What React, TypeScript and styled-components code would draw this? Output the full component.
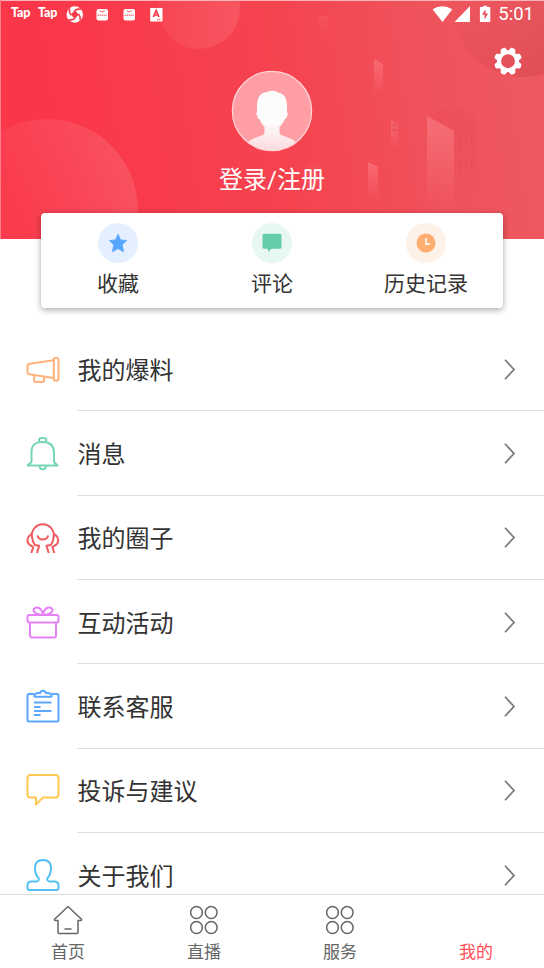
import React from "react";
import styled, { createGlobalStyle } from "styled-components";

const GlobalStyle = createGlobalStyle`
  * { box-sizing: border-box; }
  html, body { margin: 0; padding: 0; overflow: hidden; background: #fff; }
  body { font-family: Roboto, "Noto Sans CJK SC", sans-serif; color: #333; }
  svg { display: block; flex: none; }
`;

const Screen = styled.div`
  display: flex;
  flex-direction: column;
  width: 544px;
  height: 968px;
  overflow: hidden;
  background: #fff;
`;

const Header = styled.header`
  position: relative;
  display: flex;
  flex-direction: column;
  align-items: center;
  flex: none;
  height: 239px;
`;

const HeaderArt = styled.svg`
  position: absolute;
  inset: 0;
`;

const StatusBar = styled.div`
  position: relative;
  display: flex;
  justify-content: space-between;
  align-self: stretch;
  height: 27px;
  padding: 0 10px 0 11px;
`;

const StatusGroup = styled.div`
  display: flex;
  align-items: center;
`;

const TapMark = styled.span`
  width: 27px;
  color: #fff;
  font: 900 12.5px/24px Lato, sans-serif;
  letter-spacing: -0.2px;
  padding-bottom: 2px;
`;

const Clock = styled.span`
  color: #fff;
  font-size: 18.5px;
  line-height: 27px;
  margin-left: 6.5px;
  padding-top: 2px;
`;

const SettingsButton = styled.button`
  position: absolute;
  top: 46px;
  right: 21px;
  width: 30px;
  height: 30px;
  padding: 0;
  border: 0;
  background: none;
`;

const Avatar = styled.div`
  position: relative;
  margin-top: 43px;
`;

const LoginText = styled.div`
  position: relative;
  margin-top: 10px;
  color: #fff;
  font-size: 24px;
  line-height: 36px;
`;

const QuickCard = styled.section`
  position: relative;
  display: grid;
  grid-template-columns: repeat(3, 1fr);
  flex: none;
  width: 462px;
  height: 95px;
  margin: -26px 0 0 41px;
  border-radius: 4px;
  background: #fff;
  box-shadow: 0 2px 6px rgba(0, 0, 0, 0.34);
`;

const QuickItem = styled.div`
  display: flex;
  flex-direction: column;
  align-items: center;
  padding-top: 10px;
`;

const QuickLabel = styled.span`
  margin-top: 5px;
  font-size: 21px;
  line-height: 32px;
`;

const Disc = styled.div<{ $tint: string }>`
  display: grid;
  place-items: center;
  width: 40px;
  height: 40px;
  border-radius: 50%;
  background: ${(p) => p.$tint};
`;

const Menu = styled.main`
  flex: 1;
  min-height: 0;
  overflow: hidden;
  padding-top: 19.2px;
`;

const MenuRow = styled.div`
  display: flex;
  height: 84.3px;
  padding-left: 25px;
`;

const MenuIcon = styled.div`
  display: flex;
  align-items: center;
  width: 52px;
  padding-top: 1px;
`;

const MenuBody = styled.div`
  display: flex;
  flex: 1;
  align-items: center;
  justify-content: space-between;
  padding: 2px 27.5px 0 0.5px;
  border-bottom: 1px solid #e0e0e0;
`;

const MenuLabel = styled.span`
  padding-top: 2px;
  font-size: 24px;
  line-height: 36px;
`;

const TabBar = styled.nav`
  display: grid;
  grid-template-columns: repeat(4, 1fr);
  flex: none;
  height: 74px;
  border-top: 1px solid #dcdcdc;
`;

const Tab = styled.div<{ $active?: boolean }>`
  display: flex;
  flex-direction: column;
  align-items: center;
  padding-top: 10px;
  color: ${(p) => (p.$active ? "#ff4d58" : "#666")};
`;

const TabIcon = styled.div`
  height: 30px;
`;

const TabLabel = styled.span`
  margin-top: 4px;
  font-size: 17px;
  line-height: 26px;
`;

const HeaderBackdrop = () => (
  <HeaderArt width="544" height="239" viewBox="0 0 544 239">
    <defs>
      <linearGradient id="base" gradientUnits="userSpaceOnUse" x1="60" y1="120" x2="520" y2="50">
        <stop offset="0" stopColor="#fa3749" />
        <stop offset="0.5" stopColor="#f5444f" />
        <stop offset="0.78" stopColor="#ef525b" />
        <stop offset="1" stopColor="#ee585f" />
      </linearGradient>
      <linearGradient id="bubble" x1="0.3" y1="0.5" x2="0.95" y2="0.2">
        <stop offset="0" stopColor="#fff" stopOpacity="0.02" />
        <stop offset="1" stopColor="#fff" stopOpacity="0.12" />
      </linearGradient>
      <linearGradient id="topBubble" x1="0" y1="0.5" x2="1" y2="0.5">
        <stop offset="0" stopColor="#fff" stopOpacity="0.04" />
        <stop offset="1" stopColor="#fff" stopOpacity="0.11" />
      </linearGradient>
      <linearGradient id="shade" x1="0.1" y1="0.5" x2="0.55" y2="1">
        <stop offset="0" stopColor="#b5303a" stopOpacity="0.02" />
        <stop offset="1" stopColor="#b5303a" stopOpacity="0.22" />
      </linearGradient>
      <linearGradient id="tower" x1="0" y1="0" x2="0" y2="1">
        <stop offset="0" stopColor="#ff8a92" stopOpacity="0.5" />
        <stop offset="1" stopColor="#ff8a92" stopOpacity="0" />
      </linearGradient>
      <linearGradient id="side" x1="0" y1="0" x2="0" y2="1">
        <stop offset="0" stopColor="#d63e4c" stopOpacity="0.12" />
        <stop offset="1" stopColor="#d63e4c" stopOpacity="0" />
      </linearGradient>
    </defs>
    <rect width="544" height="239" fill="url(#base)" />
    <circle cx="47" cy="210" r="91" fill="url(#bubble)" />
    <circle cx="199" cy="8" r="41" fill="url(#topBubble)" />
    <circle cx="523" cy="7" r="70" fill="url(#shade)" />
    <path d="M374 59l9 5v30h-9z" fill="url(#tower)" />
    <path d="M319 16h9v21h-9z" fill="url(#tower)" opacity="0.3" />
    <path d="M391 120l7 4v24h-7z" fill="url(#tower)" />
    <path d="M393 124l4 2M393 129l4 2" stroke="#df4853" strokeWidth="3" strokeDasharray="1.4 1" />
    <path d="M368 162l10 5v33h-10z" fill="url(#tower)" />
    <path d="M304 167l10-4 8 4v40h-18z" fill="url(#tower)" opacity="0.2" />
    <path d="M427 116l26-11 24 13-23 13z" fill="#dd4350" opacity="0.12" />
    <path d="M427 116l27 15v78h-27z" fill="url(#tower)" />
    <path d="M454 131l23-13v74l-23 12z" fill="url(#side)" />
    <path d="M460 139v10M465.500 136v10M471.500 132v10M460 163v10M465.500 160v10M471.500 156v10" stroke="#dc4551" opacity="0.45" />
    <path d="M0 .5h544" stroke="#f9b4b8" />
    <path d="M.5 0v239" stroke="#fb7d87" />
  </HeaderArt>
);

const StatusLogos = () => (
  <svg width="98" height="26" viewBox="65 0 98 26">
    <circle cx="74.800" cy="13.500" r="8.200" fill="#fff" />
    <path d="M74.800 9.300l4 4.200-4 4.200-4-4.200z" fill="#f93b4a" />
    {[0, 90, 180, 270].map((a) => (
      <path key={a} transform={`rotate(${a} 74.800 13.500)`} d="M74.500 10Q76.500 7.500 81 8.300" fill="none" stroke="#f93b4a" strokeWidth="1.600" />
    ))}
    {[96.5, 123.5].map((x) => (
      <g key={x} transform={`translate(${x} 8)`}>
        <rect width="11.500" height="11.500" rx="2" fill="#fff" />
        <path d="M3.300 1.700q2.400 2.600 4.900 0" fill="none" stroke="#f93b4a" strokeWidth=".9" />
        <path d="M1 6.300h9.600" stroke="#f98a92" strokeWidth="1.500" strokeDasharray="1.500 .5" />
      </g>
    ))}
    <rect x="150.200" y="7" width="12.300" height="13.500" rx=".7" fill="#fff" />
    <path d="M153.400 16l2.800-6.500L159 16M154.400 14h3.600" fill="none" stroke="#f93b4a" strokeWidth="1.700" />
    <path d="M157 18.700h4" stroke="#f93b4a" strokeDasharray="1.500 .5" />
  </svg>
);

const SystemIcons = () => (
  <svg width="60" height="26" viewBox="432 0 60 26" fill="#fff">
    <path d="M432.500 8.300Q442.300 2 452.300 8.300L442.500 21z" />
    <path d="M454.500 21L470 5v16z" />
    <path d="M483 4.700h4v1.300h2.500q.8 0 .8.800v13.400q0 .8-.8.800h-8.800q-.8 0-.8-.8V6.800q0-.8.8-.8h2.300z" />
    <path d="M485.500 8.200l-3.400 5.600h2.500v4.700l3.400-5.900h-2.500z" fill="#e94e5a" />
  </svg>
);

const gearAngles = [22.5, 67.5, 112.5, 157.5, 202.5, 247.5, 292.5, 337.5];

const Gear = () => (
  <svg width="30" height="30" viewBox="-15 -15.200 30 30">
    <circle r="8.900" fill="none" stroke="#fff" strokeWidth="3.900" />
    {gearAngles.map((a) => (
      <path key={a} transform={`rotate(${a})`} d="M-3.700-9.800L-2.400-13.500Q0-14.600 2.400-13.500L3.700-9.800z" fill="#fff" />
    ))}
  </svg>
);

const AvatarArt = () => (
  <svg width="82" height="82" viewBox="0 0 82 82">
    <defs>
      <linearGradient id="person" x1="0" y1="0" x2="0" y2="1">
        <stop offset="0.5" stopColor="#fcfcfc" />
        <stop offset="1" stopColor="#fbd8dc" />
      </linearGradient>
      <clipPath id="avatarClip"><circle cx="41" cy="41" r="39.500" /></clipPath>
    </defs>
    <circle cx="41" cy="41" r="39.500" fill="#ff9fa5" />
    <path clipPath="url(#avatarClip)" fill="url(#person)" d="M26 36Q26 23 36 22Q43 19 48 23Q56 24 56 37V42Q57.500 43 56 46Q55.500 49 54 49Q51.500 54 48.500 57V63Q49 65 54 66.500Q62 69 67 73.500V83H15V73.500Q20 69 28 66.500Q33 65 33.500 63V57Q30.500 54 28.300 49Q26.500 49 26.300 46Q24.500 43 26 42z" />
    <circle cx="41" cy="41" r="39.600" fill="none" stroke="#ffd4d7" strokeWidth="1.300" />
  </svg>
);

const Star = () => (
  <svg width="20" height="20" viewBox="0 0 20 20">
    <path d="M10 1.200l2.500 5.700 6.300.6-4.700 4.200 1.500 7-5.600-3.100-5.600 3.100 1.500-7L1.200 7.500l6.300-.6z" fill="#56a5ff" stroke="#56a5ff" strokeWidth=".8" strokeLinejoin="round" />
  </svg>
);

const Comment = () => (
  <svg width="20" height="20" viewBox="0 0 20 20">
    <path d="M2 .8h16q1.500 0 1.500 1.500v12q0 1.500-1.500 1.500H9.500L6 19v-3.200H2q-1.500 0-1.500-1.500v-12Q.5.800 2 .8z" fill="#65cea8" />
  </svg>
);

const History = () => (
  <svg width="20" height="20" viewBox="0 0 20 20">
    <circle cx="10" cy="10" r="9.500" fill="#ffae70" />
    <path d="M10 5v6.200h4" fill="none" stroke="#fff4eb" strokeWidth="1.800" />
  </svg>
);

const LineIcon = ({ color, children }: { color: string; children: React.ReactNode }) => (
  <svg width="36" height="36" viewBox="0 0 36 36" fill="none" stroke={color} strokeWidth="2" strokeLinejoin="round">
    {children}
  </svg>
);

const menuItems = [
  {
    label: "我的爆料",
    color: "#ffb27b",
    icon: (
      <>
        <path d="M28.500 8.200L4.500 11.800Q2.500 12 2.500 14v6Q2.500 22 4.500 22.200L28.500 26" />
        <rect x="28.800" y="5.700" width="4.700" height="23" rx="2.300" />
        <path d="M9.200 23v6q0 1 1 1h7.500q1.300 0 1.300-1.300v-4" />
      </>
    ),
  },
  {
    label: "消息",
    color: "#76d6b3",
    icon: (
      <>
        <path d="M2.500 29.500h30L29 26V16.500Q29 6 17.600 6T6.500 16.500V26z" strokeWidth="2" />
        <path d="M14.200 6.500V4q0-2 2-2h3q2 0 2 2v2.500M14.500 30q0 3.200 3.200 3.200T21 30" />
      </>
    ),
  },
  {
    label: "我的圈子",
    color: "#f25a5f",
    icon: (
      <>
        <path d="M12 33l2.200-7.300-4.400-.8Q7.600 22 7.200 18A11 11 0 1 1 28.500 18Q28.100 22 25.900 24.900l-4.400.8 2.200 7.300M12.500 15.500q1 4 5.300 4t5.400-4" />
        <path d="M6.500 14Q2.500 16.500 2.500 20.500q0 3 3 4.800l2.800 1.900L6.300 33M29.200 14q4 2.500 4 6.500 0 3-3 4.800l-2.800 1.900 2 5.800" />
      </>
    ),
  },
  {
    label: "互动活动",
    color: "#e681f7",
    icon: (
      <>
        <rect x="2.500" y="10" width="31" height="7.500" rx="1.700" />
        <path d="M5 18v12.500q0 2 2 2h22q2 0 2-2V18M16.500 10Q8 8.500 8.500 5.200 9 2 12.500 2.500 17 3.300 18 9.500 19 3.300 23.500 2.500 27 2 27.500 5.200 28 8.500 19.500 10" />
      </>
    ),
  },
  {
    label: "联系客服",
    color: "#5ba8ff",
    icon: (
      <>
        <path d="M9 5H4Q2.500 5 2.500 6.500v24.500Q2.500 32.500 4 32.500h28q1.500 0 1.500-1.500V6.500Q33.500 5 32 5h-5" />
        <path d="M10 7.700h16q1 0 .6-1.300-.8-2.300-3.600-2.300h-2Q20.200 1.800 18 1.800t-3 2.300h-2q-2.800 0-3.600 2.300Q9 7.700 10 7.700zM9 13.500h17.500M9 18h6.500M9 22h17.500M9 26h6.500" />
      </>
    ),
  },
  {
    label: "投诉与建议",
    color: "#ffc850",
    icon: <path d="M5.500 2h25q3 0 3 3V21.500q0 3-3 3H18l-7 7v-7H5.500q-3 0-3-3V5q0-3 3-3z" />,
  },
  {
    label: "关于我们",
    color: "#52c0f7",
    icon: <path d="M13.500 20Q10 16.500 10 10 10 2 18 2t8 8q0 6.500-3.500 10-1.300 2.500 2 3.500h5.500q3.500.5 3.500 4V30q0 2-2 2H4.500q-2 0-2-2v-2.500q0-3.500 3.500-4h5.500q3.300-1 2-3.500z" />,
  },
];

const quickItems = [
  { label: "收藏", tint: "#e4f0ff", icon: <Star /> },
  { label: "评论", tint: "#e6f8f1", icon: <Comment /> },
  { label: "历史记录", tint: "#fef1e7", icon: <History /> },
];

const Chevron = () => (
  <svg width="14" height="24" viewBox="0 0 14 24">
    <path d="M2 1.700l9 9.800-9 9.800" fill="none" stroke="#777" strokeWidth="1.700" />
  </svg>
);

const Home = () => (
  <svg width="30" height="30" viewBox="0 0 30 30" fill="none" stroke="#666" strokeWidth="1.500" strokeLinejoin="round">
    <path d="M15 1.500L1.500 14.200Q1.200 15.200 2.200 15.500H5V27.500q0 1 1 1h18q1 0 1-1V15.500h2.800Q29 15.200 28.500 14.200zM11.500 24h7" />
  </svg>
);

const Circles = () => (
  <svg width="30" height="30" viewBox="0 0 30 30" fill="none" stroke="#666" strokeWidth="1.500">
    <circle cx="7.500" cy="7.500" r="5.900" />
    <circle cx="22.200" cy="7.500" r="5.900" />
    <circle cx="7.500" cy="22.500" r="5.900" />
    <circle cx="22.200" cy="22.500" r="5.900" />
  </svg>
);

const tabs = [
  { label: "首页", icon: <Home /> },
  { label: "直播", icon: <Circles /> },
  { label: "服务", icon: <Circles /> },
  { label: "我的", icon: null, active: true },
];

export default function App() {
  return (
    <>
      <GlobalStyle />
      <Screen>
        <Header>
          <HeaderBackdrop />
          <StatusBar>
            <StatusGroup>
              <TapMark>Tap</TapMark>
              <TapMark>Tap</TapMark>
              <StatusLogos />
            </StatusGroup>
            <StatusGroup>
              <SystemIcons />
              <Clock>5:01</Clock>
            </StatusGroup>
          </StatusBar>
          <SettingsButton aria-label="设置"><Gear /></SettingsButton>
          <Avatar><AvatarArt /></Avatar>
          <LoginText>登录/注册</LoginText>
        </Header>
        <QuickCard>
          {quickItems.map((q) => (
            <QuickItem key={q.label}>
              <Disc $tint={q.tint}>{q.icon}</Disc>
              <QuickLabel>{q.label}</QuickLabel>
            </QuickItem>
          ))}
        </QuickCard>
        <Menu>
          {menuItems.map((m) => (
            <MenuRow key={m.label}>
              <MenuIcon><LineIcon color={m.color}>{m.icon}</LineIcon></MenuIcon>
              <MenuBody>
                <MenuLabel>{m.label}</MenuLabel>
                <Chevron />
              </MenuBody>
            </MenuRow>
          ))}
        </Menu>
        <TabBar>
          {tabs.map((t) => (
            <Tab key={t.label} $active={t.active}>
              <TabIcon>{t.icon}</TabIcon>
              <TabLabel>{t.label}</TabLabel>
            </Tab>
          ))}
        </TabBar>
      </Screen>
    </>
  );
}
